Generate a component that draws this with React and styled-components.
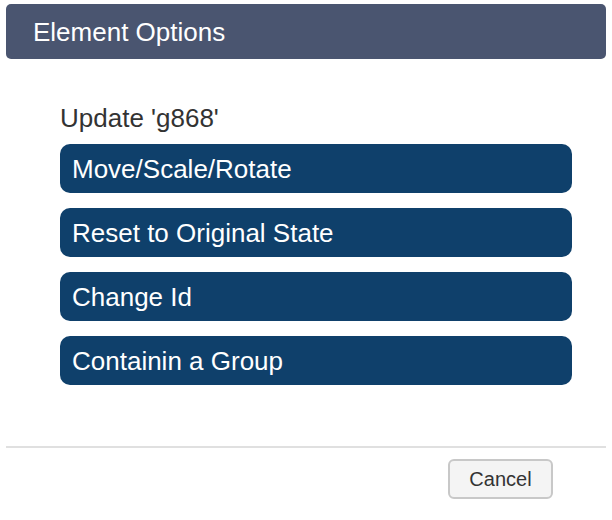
import React from "react";
import styled, { createGlobalStyle } from "styled-components";

const Global = createGlobalStyle`
  html, body { margin: 0; padding: 0; background: #fff; }
  body { font-family: "Liberation Sans", Arial, sans-serif; }
`;

const Dialog = styled.div`
  width: 612px;
  height: 520px;
  box-sizing: border-box;
  padding: 4px 6px 0;
  display: flex;
  flex-direction: column;
`;

const Header = styled.div`
  height: 55px;
  flex-shrink: 0;
  box-sizing: border-box;
  background: #4a5570;
  border-radius: 5px;
  display: flex;
  align-items: center;
  padding: 2px 0 0 27px;
  color: #fff;
  font-size: 26px;
`;

const Body = styled.div`
  padding: 44px 34px 0 54px;
  height: 389px;
  flex-shrink: 0;
  box-sizing: border-box;
  display: flex;
  flex-direction: column;
  border-bottom: 2px solid #e0e0e0;
`;

const Label = styled.div`
  font-size: 26px;
  color: #333;
  line-height: 30px;
  margin-bottom: 11px;
`;

const ActionList = styled.div`
  display: flex;
  flex-direction: column;
  gap: 15px;
`;

const ActionButton = styled.button`
  height: 49px;
  border: none;
  border-radius: 10px;
  background: #0f406b;
  color: #fff;
  font-family: inherit;
  font-size: 26px;
  text-align: left;
  padding: 2px 12px 0;
  cursor: pointer;
`;

const Footer = styled.div`
  display: flex;
  justify-content: flex-end;
  padding: 11px 53px 0 0;
`;

const CancelButton = styled.button`
  width: 105px;
  height: 40px;
  box-sizing: border-box;
  background: #f4f4f4;
  border: 2px solid #c8c8c8;
  border-radius: 6px;
  color: #333;
  font-family: inherit;
  font-size: 20px;
  cursor: pointer;
`;

const actions = [
  "Move/Scale/Rotate",
  "Reset to Original State",
  "Change Id",
  "Containin a Group",
];

export default function App() {
  return (
    <>
      <Global />
      <Dialog>
        <Header>Element Options</Header>
        <Body>
          <Label>Update 'g868'</Label>
          <ActionList>
            {actions.map((a) => (
              <ActionButton key={a}>{a}</ActionButton>
            ))}
          </ActionList>
        </Body>
        <Footer>
          <CancelButton>Cancel</CancelButton>
        </Footer>
      </Dialog>
    </>
  );
}
